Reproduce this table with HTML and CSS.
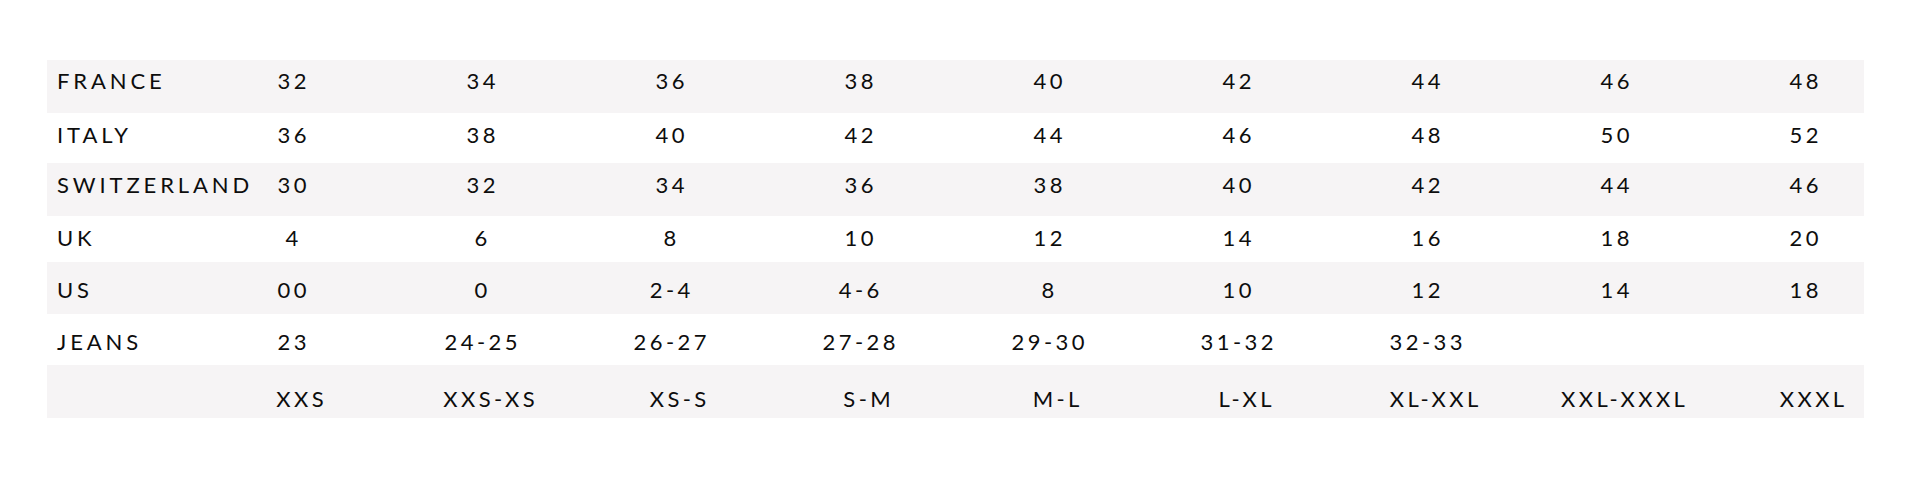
FILE: index.html
```html
<!DOCTYPE html>
<html lang="en">
<head>
<meta charset="utf-8">
<title>Size chart</title>
<link rel="stylesheet" href="styles.css">
</head>
<body>
<div class="chart">
  <div class="row shade"><span class="label">FRANCE</span><span class="val">32</span><span class="val">34</span><span class="val">36</span><span class="val">38</span><span class="val">40</span><span class="val">42</span><span class="val">44</span><span class="val">46</span><span class="val">48</span></div>
  <div class="row"><span class="label">ITALY</span><span class="val">36</span><span class="val">38</span><span class="val">40</span><span class="val">42</span><span class="val">44</span><span class="val">46</span><span class="val">48</span><span class="val">50</span><span class="val">52</span></div>
  <div class="row shade"><span class="label">SWITZERLAND</span><span class="val">30</span><span class="val">32</span><span class="val">34</span><span class="val">36</span><span class="val">38</span><span class="val">40</span><span class="val">42</span><span class="val">44</span><span class="val">46</span></div>
  <div class="row"><span class="label">UK</span><span class="val">4</span><span class="val">6</span><span class="val">8</span><span class="val">10</span><span class="val">12</span><span class="val">14</span><span class="val">16</span><span class="val">18</span><span class="val">20</span></div>
  <div class="row shade"><span class="label">US</span><span class="val">00</span><span class="val">0</span><span class="val">2-4</span><span class="val">4-6</span><span class="val">8</span><span class="val">10</span><span class="val">12</span><span class="val">14</span><span class="val">18</span></div>
  <div class="row"><span class="label">JEANS</span><span class="val">23</span><span class="val">24-25</span><span class="val">26-27</span><span class="val">27-28</span><span class="val">29-30</span><span class="val">31-32</span><span class="val">32-33</span><span class="val"></span><span class="val"></span></div>
  <div class="row shade letters"><span class="label"></span><span class="val">XXS</span><span class="val">XXS-XS</span><span class="val">XS-S</span><span class="val">S-M</span><span class="val">M-L</span><span class="val">L-XL</span><span class="val">XL-XXL</span><span class="val">XXL-XXXL</span><span class="val">XXXL</span></div>
</div>
</body>
</html>
```
FILE: styles.css
```css
html, body {
  margin: 0;
  padding: 0;
  background: #ffffff;
}

body {
  font-family: Lato, "Liberation Sans", sans-serif;
  font-size: 22px;
  line-height: 22px;
  color: #0d0d0d;
}

.chart {
  margin: 60px 0 0 47px;
  width: 1817px;
}

.row {
  display: grid;
  grid-template-columns: 150.5px repeat(8, 189px) 1fr;
  align-items: start;
  box-sizing: border-box;
}

.shade {
  background: #f6f4f5;
}

.row:nth-child(1) { height: 52.7px; padding-top: 10px; }
.row:nth-child(2) { height: 50.6px; padding-top: 11.6px; }
.row:nth-child(3) { height: 52.4px; padding-top: 11px; }
.row:nth-child(4) { height: 46.6px; padding-top: 11px; }
.row:nth-child(5) { height: 52px; padding-top: 16.4px; }
.row:nth-child(6) { height: 50.7px; padding-top: 16.8px; }
.row:nth-child(7) { height: 52.7px; padding-top: 22.8px; }

.label {
  padding-left: 10px;
  white-space: nowrap;
  letter-spacing: 3.9px;
}

.val {
  text-align: center;
  white-space: nowrap;
  letter-spacing: 3.4px;
  text-indent: 3.4px;
}

.val:last-child {
  padding-left: 34.5px;
}

.letters .val {
  padding-left: 16px;
}

.letters .val:last-child {
  padding-left: 50.5px;
}
```
